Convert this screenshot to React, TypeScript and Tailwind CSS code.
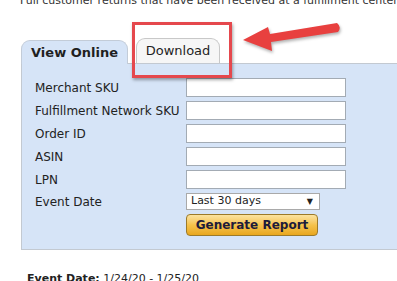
import React from 'react';

const fields = ['Merchant SKU', 'Fulfillment Network SKU', 'Order ID', 'ASIN', 'LPN'];

export default function App() {
    return (
        <div className="relative w-[397px] h-[281px] overflow-hidden bg-white text-[#222] font-['DejaVu_Sans',Verdana,sans-serif]">
            <p className="-mt-[6px] pl-[20px] text-[11px] leading-[14px] whitespace-nowrap text-[#333]">
                Full customer returns that have been received at a fulfillment center
            </p>

            {/* tabs */}
            <div className="mt-[30px] pl-[21px] flex items-end">
                <div className="relative z-10 -mb-px w-[107px] h-[24px] rounded-t-[9px] border border-b-0 border-[#c3ccd8] bg-[#d6e4f7] flex items-center justify-center text-[13px] font-bold text-[#1f1f1f]">
                    View Online
                </div>
                <div className="ml-[8px] w-[84px] h-[25px] rounded-t-[9px] border border-b-0 border-[#c8c8c8] bg-[#f6f6f6] flex items-center justify-center text-[13px] text-[#1f1f1f]">
                    Download
                </div>
            </div>

            {/* form panel */}
            <div className="ml-[21px] border-t border-b border-l border-[#c3c9d1] bg-[#d6e4f7] pt-[14px] pb-[13px] pl-[13px]">
                <div className="flex flex-col gap-[4px]">
                    {fields.map(f => (
                        <div key={f} className="flex items-center h-[19px]">
                            <span className="w-[151px] text-[12px] whitespace-nowrap">{f}</span>
                            <div className="w-[160px] h-[19px] border border-[#a3abb4] bg-white" />
                        </div>
                    ))}
                    <div className="flex items-center h-[17px]">
                        <span className="w-[151px] text-[12px]">Event Date</span>
                        <div className="w-[134px] h-[17px] border border-[#a9a9a9] bg-white flex items-center justify-between pl-[4px] pr-[6px] text-[11px]">
                            <span>Last 30 days</span>
                            <span className="text-[8px]">▼</span>
                        </div>
                    </div>
                    <div className="flex h-[22px]">
                        <span className="w-[151px]" />
                        <button className="w-[132px] h-[22px] rounded-[4px] border border-[#9c7a2a] bg-gradient-to-b from-[#fbe3a0] via-[#f5c24a] to-[#e9a71c] text-[12px] font-bold text-[#1d1b3a] leading-none">
                            Generate Report
                        </button>
                    </div>
                </div>
            </div>

            <p className="mt-[21px] pl-[27px] text-[11px] whitespace-nowrap">
                <span className="font-bold">Event Date:</span> 1/24/20 - 1/25/20
            </p>

            {/* annotation */}
            <div className="absolute left-[132px] top-[22px] w-[100px] h-[56px] border-[3px] border-[#e5484d] shadow-[1px_2px_3px_rgba(0,0,0,0.35)]" />
            <svg className="absolute left-0 top-0" width="397" height="281" viewBox="0 0 397 281">
                <path
                    d="M243 40 L268 27 L270 34 L337 23 Q342 27 338 32 L271 42 L272 51 Z"
                    fill="#e8403f"
                    style={{ filter: 'drop-shadow(1px 2px 1.5px rgba(0,0,0,0.3))' }}
                />
            </svg>
        </div>
    );
}
